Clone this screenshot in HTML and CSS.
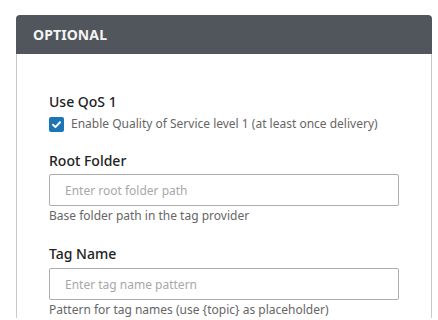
FILE: index.html
```html
<!DOCTYPE html>
<html>
<head>
<meta charset="utf-8">
<link rel="stylesheet" href="styles.css">
</head>
<body>
<section class="panel">
  <header class="panel-head">OPTIONAL</header>
  <div class="panel-body">
    <div class="group group-qos">
      <div class="label">Use QoS 1</div>
      <label class="check-row">
        <span class="checkbox"><svg width="15" height="15" viewBox="0 0 15 15"><path d="M4 7.8 L6.4 10.1 L11 5.3" fill="none" stroke="#fff" stroke-width="2" stroke-linecap="round" stroke-linejoin="round"/></svg></span>
        <span class="check-text">Enable Quality of Service level 1 (at least once delivery)</span>
      </label>
    </div>
    <div class="group">
      <div class="label">Root Folder</div>
      <input class="field" type="text" placeholder="Enter root folder path">
      <div class="help">Base folder path in the tag provider</div>
    </div>
    <div class="group group-last">
      <div class="label">Tag Name</div>
      <input class="field field-tag" type="text" placeholder="Enter tag name pattern">
      <div class="help">Pattern for tag names (use {topic} as placeholder)</div>
    </div>
  </div>
</section>
</body>
</html>
```
FILE: styles.css
```css
html, body {
  margin: 0;
  padding: 0;
  background: #fff;
  font-family: "Noto Sans", "Open Sans", sans-serif;
}
body {
  height: 320px;
  overflow: hidden;
}
.panel {
  margin: 15px 0 0 16px;
  width: 416px;
}
.panel-head {
  height: 39px;
  box-sizing: border-box;
  background: #51555c;
  color: #f4f4f4;
  font-size: 14px;
  font-weight: 700;
  letter-spacing: 0.1px;
  line-height: 39px;
  padding-left: 17px;
  border-radius: 4px 4px 0 0;
}
.panel-body {
  border-left: 1px solid #c9c9c9;
  border-right: 1px solid #c9c9c9;
  padding: 38px 32px 0 32px;
}
.group {
  margin-bottom: 20px;
}
.group-qos {
  margin-bottom: 18px;
}
.group-last {
  margin-bottom: 0;
}
.label {
  font-size: 14px;
  font-weight: 500;
  line-height: 20px;
  color: #222;
}
.check-row {
  display: flex;
  align-items: center;
  gap: 7px;
  margin-top: 3px;
  height: 18px;
}
.checkbox {
  width: 15px;
  height: 15px;
  border-radius: 2px;
  background: #1b75b6;
  display: flex;
}
.check-text {
  font-size: 12px;
  line-height: 18px;
  color: #666;
}
.field {
  display: block;
  box-sizing: border-box;
  width: 350px;
  height: 32px;
  margin-top: 3px;
  border: 1px solid #a9adb0;
  border-radius: 2px;
  padding: 0 15px;
  font-family: "Noto Sans", "Open Sans", sans-serif;
  font-size: 12px;
  color: #222;
  background: #fff;
  outline: none;
}
.field-tag {
  margin-top: 4px;
}
.field::placeholder {
  color: #a8a8a8;
}
.help {
  margin-top: 1px;
  font-size: 12px;
  line-height: 17px;
  color: #666;
}
```
